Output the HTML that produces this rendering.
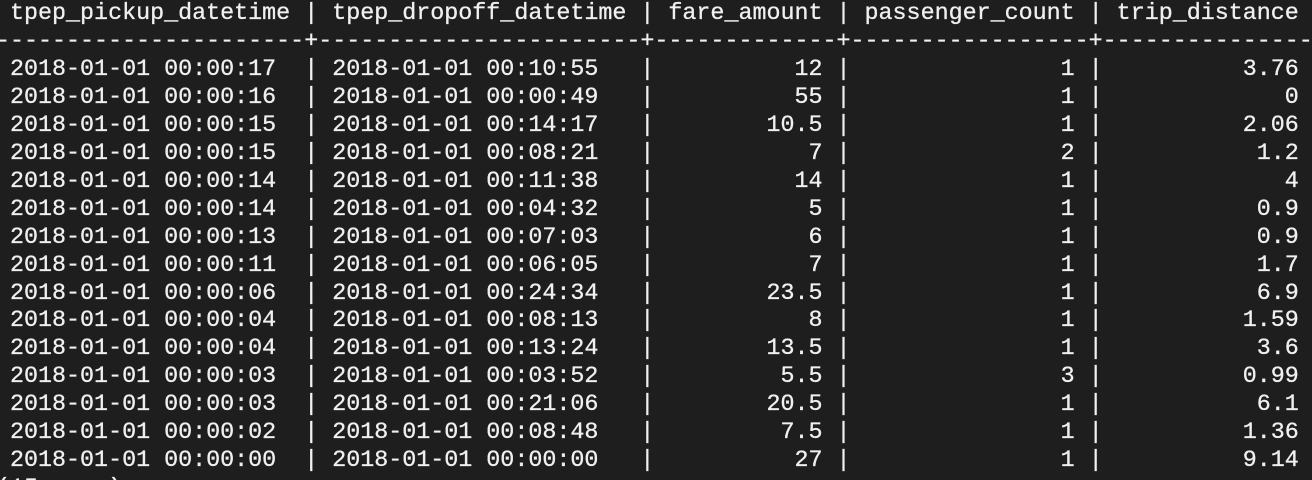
<!DOCTYPE html>
<html><head><meta charset="utf-8"><style>
html,body{margin:0;padding:0;background:#1e1e1e;width:1312px;height:480px;overflow:hidden;position:relative}
pre{margin:0;position:absolute;left:-4px;top:1px;font-family:"Liberation Mono",monospace;font-size:23.35px;line-height:27.95px;color:#f0f0f0;white-space:pre;font-weight:normal;-webkit-text-stroke:0.3px #f0f0f0}
</style></head><body><pre> tpep_pickup_datetime | tpep_dropoff_datetime | fare_amount | passenger_count | trip_distance
----------------------+-----------------------+-------------+-----------------+---------------
 2018-01-01 00:00:17  | 2018-01-01 00:10:55   |          12 |               1 |          3.76
 2018-01-01 00:00:16  | 2018-01-01 00:00:49   |          55 |               1 |             0
 2018-01-01 00:00:15  | 2018-01-01 00:14:17   |        10.5 |               1 |          2.06
 2018-01-01 00:00:15  | 2018-01-01 00:08:21   |           7 |               2 |           1.2
 2018-01-01 00:00:14  | 2018-01-01 00:11:38   |          14 |               1 |             4
 2018-01-01 00:00:14  | 2018-01-01 00:04:32   |           5 |               1 |           0.9
 2018-01-01 00:00:13  | 2018-01-01 00:07:03   |           6 |               1 |           0.9
 2018-01-01 00:00:11  | 2018-01-01 00:06:05   |           7 |               1 |           1.7
 2018-01-01 00:00:06  | 2018-01-01 00:24:34   |        23.5 |               1 |           6.9
 2018-01-01 00:00:04  | 2018-01-01 00:08:13   |           8 |               1 |          1.59
 2018-01-01 00:00:04  | 2018-01-01 00:13:24   |        13.5 |               1 |           3.6
 2018-01-01 00:00:03  | 2018-01-01 00:03:52   |         5.5 |               3 |          0.99
 2018-01-01 00:00:03  | 2018-01-01 00:21:06   |        20.5 |               1 |           6.1
 2018-01-01 00:00:02  | 2018-01-01 00:08:48   |         7.5 |               1 |          1.36
 2018-01-01 00:00:00  | 2018-01-01 00:00:00   |          27 |               1 |          9.14
(15 rows)</pre></body></html>
